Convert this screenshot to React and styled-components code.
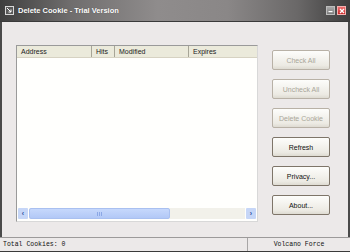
import React from "react";
import styled, { createGlobalStyle } from "styled-components";

const Global = createGlobalStyle`
  html, body { margin: 0; padding: 0; }
  body { width: 350px; height: 252px; overflow: hidden; background: #ECE9E9; }
`;

const Window = styled.div`
  width: 350px;
  height: 252px;
  display: flex;
  flex-direction: column;
  box-sizing: border-box;
  background: #ECE9E9;
  font-family: "Liberation Sans", Arial, sans-serif;
  overflow: hidden;
`;

const TitleBar = styled.div`
  height: 22px;
  flex: none;
  display: flex;
  align-items: center;
  padding: 0 4px 0 5px;
  box-sizing: border-box;
  background: linear-gradient(90deg, #3f3f3f 0%, #6f6d6d 20%, #8f8c8c 45%, #8a8787 65%, #6a6868 85%, #3d3d3d 100%);
  border-bottom: 1px solid #3a3a3a;
`;

const Title = styled.span`
  flex: 1;
  margin-left: 4px;
  color: #ffffff;
  font-weight: bold;
  font-size: 7.5px;
  font-family: "Liberation Sans", Arial, sans-serif;
  text-shadow: 0 0 1px rgba(0,0,0,0.4);
`;

const CapButton = styled.div`
  width: 9px;
  height: 9px;
  margin-left: 2px;
  box-sizing: border-box;
  display: flex;
  align-items: center;
  justify-content: center;
  background: ${p => (p.$close ? "linear-gradient(#f07070,#c82828)" : "linear-gradient(#a8a8a8,#7c7c7c)")};
  border: 1px solid ${p => (p.$close ? "#f4b0b0" : "#bcbcbc")};
`;

const Body = styled.div`
  flex: 1;
  min-height: 0;
  display: flex;
  gap: 14px;
  padding: 23px 0 15px 14px;
  border-left: 2px solid #4a4a4a;
  border-right: 2px solid #4a4a4a;
  box-sizing: border-box;
`;

const ListBox = styled.div`
  width: 242px;
  display: flex;
  flex-direction: column;
  border: 1px solid #9a9a9a;
  border-right-color: #d8d8d8;
  border-bottom-color: #d8d8d8;
  background: #FFFFFD;
  box-sizing: border-box;
`;

const HeaderRow = styled.div`
  height: 11px;
  display: flex;
  background: #EBEADB;
  border-bottom: 1px solid #d6d2c2;
  flex: none;
`;

const HeaderCell = styled.div`
  width: ${p => p.$w}px;
  box-sizing: border-box;
  padding-left: 4px;
  font-size: 7px;
  line-height: 11px;
  color: #222;
  border-right: ${p => (p.$last ? "none" : "1px solid #a7a597")};
  white-space: nowrap;
  overflow: hidden;
`;

const ListArea = styled.div`
  flex: 1;
`;

const ScrollBar = styled.div`
  height: 11px;
  margin: 0 1px 2px 1px;
  display: flex;
  gap: 1px;
  flex: none;
`;

const ScrollArrow = styled.div`
  width: 10px;
  height: 11px;
  background: #C6D6F7;
  border-radius: 1px;
  display: flex;
  align-items: center;
  justify-content: center;
  color: #2B4FA0;
  font-size: 7px;
  font-weight: bold;
  line-height: 1;
`;

const Track = styled.div`
  flex: 1;
  display: flex;
  background: #F2F1EA;
`;

const Thumb = styled.div`
  width: 141px;
  background: linear-gradient(#C6D8FC, #B2C8F6);
  border: 1px solid #A9C0F0;
  border-radius: 2px;
  box-sizing: border-box;
  display: flex;
  align-items: center;
  justify-content: center;
`;

const Grip = styled.div`
  width: 5px;
  height: 4px;
  background: repeating-linear-gradient(90deg, #8CA8E6 0 1px, transparent 1px 2px);
`;

const Buttons = styled.div`
  display: flex;
  flex-direction: column;
  gap: 9px;
  padding-top: 5px;
`;

const Button = styled.div`
  width: 58px;
  height: 20px;
  box-sizing: border-box;
  border: 1px solid ${p => (p.$disabled ? "#B8B1A6" : "#7E7569")};
  border-radius: 2px;
  background: linear-gradient(#FDFDFB, #ECEAE3 80%, #DEDBD2);
  display: flex;
  align-items: center;
  justify-content: center;
  font-size: 7px;
  color: ${p => (p.$disabled ? "#A9A699" : "#111")};
`;

const StatusBar = styled.div`
  height: 15px;
  flex: none;
  display: flex;
  border-top: 1px solid #9c9a9a;
  border-bottom: 1px solid #3a3a3a;
  box-sizing: border-box;
  font-family: "Liberation Mono", "DejaVu Sans Mono", monospace;
  font-size: 6.5px;
  color: #111;
`;

const StatusCell = styled.div`
  width: ${p => p.$w}px;
  flex: ${p => (p.$w ? "none" : "1")};
  display: flex;
  align-items: center;
  justify-content: ${p => (p.$center ? "center" : "flex-start")};
  padding-left: ${p => (p.$center ? 0 : 3)}px;
  border-left: ${p => (p.$divider ? "1px solid #a8a6a6" : "none")};
  white-space: nowrap;
`;

export default function App() {
  return (
    <>
      <Global />
      <Window>
        <TitleBar>
          <svg width="9" height="9" viewBox="0 0 9 9">
            <rect x="0.5" y="0.5" width="8" height="8" fill="#5a5a5a" stroke="#d8d8d8" />
            <path d="M2 2 L6 6 M6 3.5 L6 6 L3.5 6" stroke="#ffffff" strokeWidth="1" fill="none" />
          </svg>
          <Title>Delete Cookie - Trial Version</Title>
          <CapButton>
            <svg width="5" height="5" viewBox="0 0 5 5"><rect x="0.5" y="3" width="4" height="1.2" fill="#fff" /></svg>
          </CapButton>
          <CapButton $close>
            <svg width="6" height="6" viewBox="0 0 6 6"><path d="M1 1 L5 5 M5 1 L1 5" stroke="#fff" strokeWidth="1.3" /></svg>
          </CapButton>
        </TitleBar>
        <Body>
          <ListBox>
            <HeaderRow>
              <HeaderCell $w={75}>Address</HeaderCell>
              <HeaderCell $w={23}>Hits</HeaderCell>
              <HeaderCell $w={74}>Modified</HeaderCell>
              <HeaderCell $w={68} $last>Expires</HeaderCell>
            </HeaderRow>
            <ListArea />
            <ScrollBar>
              <ScrollArrow>‹</ScrollArrow>
              <Track>
                <Thumb><Grip /></Thumb>
              </Track>
              <ScrollArrow>›</ScrollArrow>
            </ScrollBar>
          </ListBox>
          <Buttons>
            <Button $disabled>Check All</Button>
            <Button $disabled>Uncheck All</Button>
            <Button $disabled>Delete Cookie</Button>
            <Button>Refresh</Button>
            <Button>Privacy...</Button>
            <Button>About...</Button>
          </Buttons>
        </Body>
        <StatusBar>
          <StatusCell $w={244}>Total Cookies: 0</StatusCell>
          <StatusCell $center $divider>Volcano Force</StatusCell>
        </StatusBar>
      </Window>
    </>
  );
}
